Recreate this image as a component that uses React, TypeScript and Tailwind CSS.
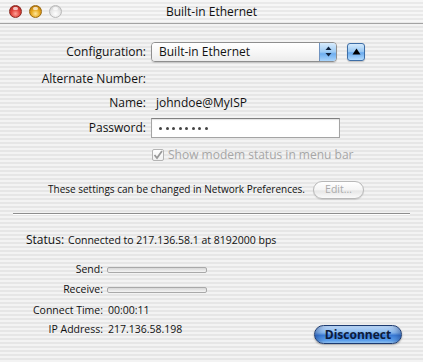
import React from "react";

const font = { fontFamily: '"Open Sans", "Noto Sans", sans-serif' };

function TrafficLight({ color }: { color: "red" | "yellow" | "grey" }) {
  const bg =
    color === "red"
      ? "bg-[radial-gradient(circle_at_50%_70%,#ffa296_0%,#e2453d_45%,#a0231b_100%)] border-[#8a2a22]"
      : color === "yellow"
      ? "bg-[radial-gradient(circle_at_50%_70%,#ffe79a_0%,#e7a91f_45%,#a8650a_100%)] border-[#9a6a12]"
      : "bg-[radial-gradient(circle_at_50%_70%,#ffffff_0%,#e6e6e6_50%,#c4c4c4_100%)] border-[#b8b8b8]";
  return (
    <div className={`relative w-[13px] h-[13px] rounded-full border ${bg}`}>
      <div className="absolute left-[3px] top-[1px] w-[5px] h-[3px] rounded-full bg-white/70" />
    </div>
  );
}

export default function App() {
  return (
    <div
      className="w-[423px] h-[362px] overflow-hidden flex flex-col text-[#111] bg-[repeating-linear-gradient(180deg,#f3f3f3_0px,#f3f3f3_2px,#e6e6e6_2px,#e6e6e6_4px)]"
      style={font}
    >
      {/* Title bar */}
      <div className="relative h-[24px] shrink-0 flex items-center border-b border-[#a3a3a3] bg-[repeating-linear-gradient(180deg,#f6f6f6_0px,#f6f6f6_2px,#e9e9e9_2px,#e9e9e9_4px)]">
        <div className="flex items-center gap-[7px] pl-[9px]">
          <TrafficLight color="red" />
          <TrafficLight color="yellow" />
          <TrafficLight color="grey" />
        </div>
        <div className="absolute inset-0 flex items-center justify-center text-[12px] pt-[1px]">
          Built-in Ethernet
        </div>
      </div>

      {/* Configuration */}
      <div className="mt-[17px] h-[21px] flex items-center">
        <div className="w-[147px] text-right text-[12px] pr-[1px]">Configuration:</div>
        <div className="ml-[4px] w-[186px] h-[20px] flex rounded-[4px] border border-[#8e8e8e] overflow-hidden shadow-[0_1px_1px_rgba(0,0,0,0.15)]">
          <div className="flex-1 flex items-center pl-[7px] text-[12px] bg-[linear-gradient(180deg,#ffffff_0%,#f7f7f7_50%,#ececec_100%)]">
            Built-in Ethernet
          </div>
          <div className="w-[17px] flex items-center justify-center border-l border-[#6f93c0] bg-[linear-gradient(180deg,#d8ecfd_0%,#9ccaf4_50%,#6eaef0_60%,#a9d4fb_100%)]">
            <svg width="7" height="11" viewBox="0 0 7 11">
              <path d="M3.5 0.5 L6.5 4 L0.5 4 Z" fill="#10233f" />
              <path d="M3.5 10.5 L6.5 7 L0.5 7 Z" fill="#10233f" />
            </svg>
          </div>
        </div>
        <div className="ml-[10px] w-[18px] h-[18px] rounded-[3px] border border-[#3e6ea6] flex items-center justify-center bg-[linear-gradient(180deg,#d6ebfd_0%,#97c7f3_48%,#69aaee_55%,#b5dcfd_100%)] shadow-[0_1px_1px_rgba(0,0,0,0.2)]">
          <svg width="9" height="7" viewBox="0 0 9 7">
            <path d="M4.5 0.5 L8.5 6.5 L0.5 6.5 Z" fill="#000" />
          </svg>
        </div>
      </div>

      {/* Alternate Number */}
      <div className="mt-[9px] h-[16px] flex items-center">
        <div className="w-[147px] text-right text-[12px] pr-[1px]">Alternate Number:</div>
      </div>

      {/* Name */}
      <div className="mt-[8px] h-[16px] flex items-center">
        <div className="w-[147px] text-right text-[12px] pr-[1px]">Name:</div>
        <div className="ml-[9px] text-[12px]">johndoe@MyISP</div>
      </div>

      {/* Password */}
      <div className="mt-[7px] h-[20px] flex items-center">
        <div className="w-[147px] text-right text-[12px] pr-[1px]">Password:</div>
        <div className="ml-[4px] w-[189px] h-[20px] bg-white border border-[#a4a4a4] border-t-[#808080] flex items-center pl-[7px] shadow-[inset_0_1px_1px_rgba(0,0,0,0.12)]">
          <div className="flex gap-[3.5px]">
            {[0, 1, 2, 3, 4, 5, 6, 7].map((i) => (
              <div key={i} className="w-[3px] h-[3px] rounded-full bg-[#444]" />
            ))}
          </div>
        </div>
      </div>

      {/* Checkbox */}
      <div className="mt-[9px] h-[16px] flex items-center">
        <div className="ml-[152px] w-[12px] h-[12px] border border-[#b4b4b4] bg-[linear-gradient(180deg,#ffffff_0%,#f0f0f0_100%)] rounded-[2px] flex items-center justify-center">
          <svg width="10" height="10" viewBox="0 0 10 10">
            <path d="M1.5 5 L4 8 L9 1" fill="none" stroke="#9a9a9a" strokeWidth="1.8" />
          </svg>
        </div>
        <div className="ml-[4px] text-[12px] text-[#a6a6a6]">Show modem status in menu bar</div>
      </div>

      {/* Settings note */}
      <div className="mt-[17px] h-[19px] flex items-center">
        <div className="ml-[48px] text-[10px]">
          These settings can be changed in Network Preferences.
        </div>
        <div className="ml-[8px] w-[51px] h-[18px] rounded-full border border-[#b8b8b8] bg-[linear-gradient(180deg,#ffffff_0%,#f4f4f4_50%,#e6e6e6_55%,#fafafa_100%)] flex items-center justify-center text-[10.5px] text-[#aaaaaa] shadow-[0_1px_1px_rgba(0,0,0,0.12)]">
          Edit…
        </div>
      </div>

      {/* Separator */}
      <div className="mt-[14px] mx-[13px] h-px bg-[#8e8e8e] shadow-[0_1px_0_#ffffff]" />

      {/* Status */}
      <div className="mt-[18px] h-[16px] flex items-center">
        <div className="ml-[26px] text-[12px]">Status:</div>
        <div className="ml-[4px] text-[10.5px] pt-[1px]">Connected to 217.136.58.1 at 8192000 bps</div>
      </div>

      {/* Send */}
      <div className="mt-[15px] h-[14px] flex items-center">
        <div className="w-[104px] text-right text-[10.5px] pr-[1px]">Send:</div>
        <div className="ml-[3px] w-[100px] h-[6px] rounded-[2px] border border-[#a9a9a9] bg-[linear-gradient(180deg,#d8d8d8_0%,#f4f4f4_100%)]" />
      </div>

      {/* Receive */}
      <div className="mt-[6px] h-[14px] flex items-center">
        <div className="w-[104px] text-right text-[10.5px] pr-[1px]">Receive:</div>
        <div className="ml-[3px] w-[100px] h-[6px] rounded-[2px] border border-[#a9a9a9] bg-[linear-gradient(180deg,#d8d8d8_0%,#f4f4f4_100%)]" />
      </div>

      {/* Connect Time */}
      <div className="mt-[7px] h-[14px] flex items-center">
        <div className="w-[104px] text-right text-[10.5px] pr-[1px]">Connect Time:</div>
        <div className="ml-[4px] text-[10.5px]">00:00:11</div>
      </div>

      {/* IP Address + Disconnect */}
      <div className="mt-[4px] h-[22px] flex items-start">
        <div className="w-[104px] text-right text-[10.5px] pr-[1px] h-[14px] leading-[14px]">IP Address:</div>
        <div className="ml-[4px] text-[10.5px] h-[14px] leading-[14px]">217.136.58.198</div>
        <div className="ml-auto mr-[21px] mt-[3px] w-[88px] h-[19px] rounded-full border border-[#1c3a70] flex items-center justify-center text-[12px] font-bold text-[#0c1a3a] bg-[linear-gradient(180deg,#c4defb_0%,#84b5ec_40%,#3a7bd6_55%,#5fa3ee_85%,#9ccdfb_100%)] shadow-[0_1px_2px_rgba(0,0,0,0.35),inset_6px_0_6px_-4px_rgba(20,50,120,0.5),inset_-6px_0_6px_-4px_rgba(20,50,120,0.5)]">
          Disconnect
        </div>
      </div>
    </div>
  );
}
